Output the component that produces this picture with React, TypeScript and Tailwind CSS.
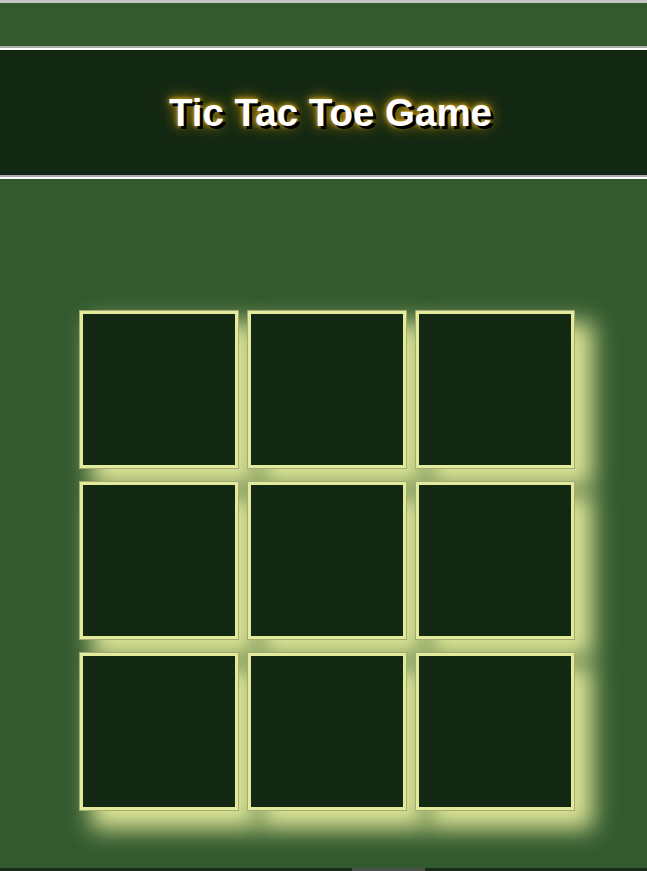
const cells = Array.from({ length: 9 }, (_, i) => i);

const App = () => {
  return (
    <div className="flex h-[871px] w-full flex-col overflow-hidden bg-[#335a2f] font-['Liberation_Sans',Arial,sans-serif]">
      {/* top edge */}
      <div className="h-[3px] w-full bg-[#c3c7c3]" />

      {/* Title bar */}
      <header className="mt-[43px] flex h-[133px] items-center justify-center border-y-4 border-white bg-[#132812] [border-style:groove]">
        <h1 className="ml-[14px] text-[38.5px] font-bold text-white [text-shadow:3px_3px_0_#000,0_0_14px_#e8a200,0_0_5px_#ffcc33]">
          Tic Tac Toe Game
        </h1>
      </header>

      {/* Board */}
      <div className="mt-[132px] ml-[80px] grid w-[494px] grid-cols-3 gap-x-[10px] gap-y-[14px]">
        {cells.map((c) => (
          <div
            key={c}
            className="h-[157px] w-[158px] border-[3px] border-[#e2ea9c] bg-[#132812] shadow-[0_0_0_1px_#a4aa74,15px_15px_22px_4px_#dde597]"
          />
        ))}
      </div>

      <div className="flex-1" />
      {/* bottom strip */}
      <div className="flex h-[3px] w-full bg-[#1a2a19]">
        <div className="ml-[352px] h-full w-[73px] bg-[#4b504b]" />
      </div>
    </div>
  );
};

export default App;
